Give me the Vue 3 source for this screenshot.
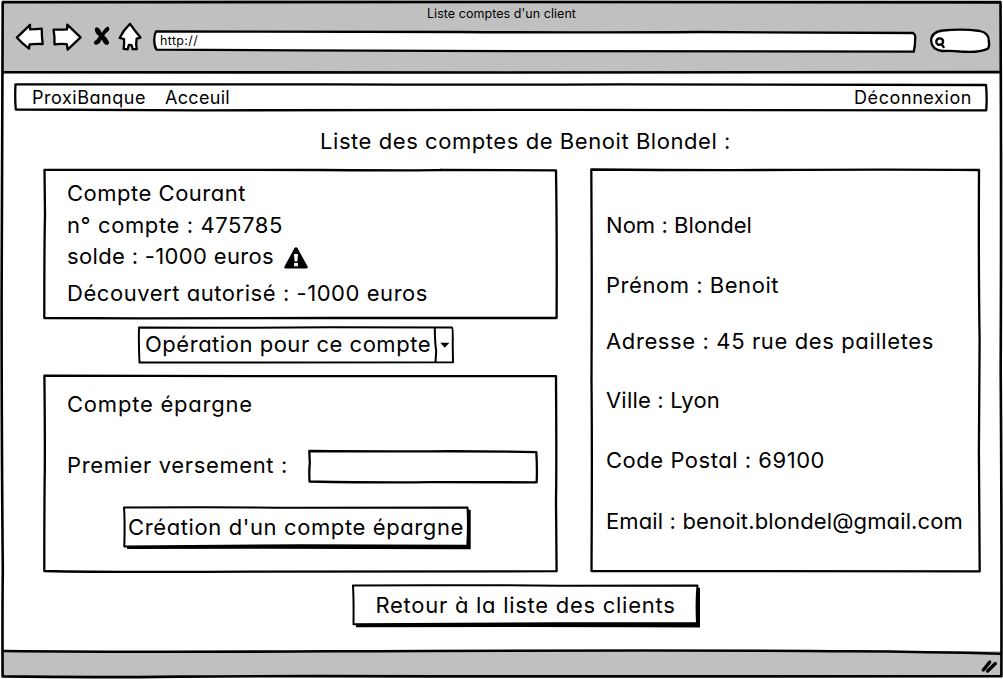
<script setup>
// Spreads the letters of a label so that it fills the given width.
const vFit = {
  mounted(el, { value }) {
    const natural = el.getBoundingClientRect().width
    el.style.letterSpacing = (value - natural) / el.textContent.length + 'px'
  },
}

const courant = [
  { text: 'Compte Courant', width: 179 },
  { text: 'n° compte : 475785', width: 216 },
  { text: 'solde : -1000 euros', width: 207, warning: true },
  { text: 'Découvert autorisé : -1000 euros', width: 361, last: true },
]

const client = [
  { text: 'Nom : Blondel', width: 146, size: 'h60' },
  { text: 'Prénom : Benoit', width: 173, size: 'h60' },
  { text: 'Adresse : 45 rue des pailletes', width: 328, size: 'h52' },
  { text: 'Ville : Lyon', width: 114, size: 'h66' },
  { text: 'Code Postal : 69100', width: 219, size: 'h54' },
  { text: 'Email : benoit.blondel@gmail.com', width: 357, size: 'h68' },
]
</script>

<template>
  <div class="window">
    <header class="chrome">
      <div class="title"><span v-fit="149">Liste comptes d'un client</span></div>
      <div class="toolbar">
        <svg class="icons" viewBox="14 22 130 30" width="130" height="30">
          <g class="ink fill-white">
            <path d="M16.8 37.6 L30 24.8 L30 29.4 Q36 29.2 41.7 28.7 Q41.8 37 42.7 44 Q36 43.6 29.6 44.4 L29 48.6 Q22 43.5 16.8 37.6Z" />
            <path d="M53.6 29.6 Q61 29.8 67 29.4 L67.3 24.6 Q74 31 80.6 37.3 L67.6 49.6 L66.8 44.2 Q60 43.5 54.5 44.4 Q54.8 37 53.6 29.6Z" />
            <path d="M130 23.9 Q135 31 140.5 37.6 L136.7 38.6 Q135.6 44 136.8 49.2 L132.6 49.2 L131.6 45.2 L128.8 45 L127.6 49.4 L123.6 48.8 Q124.4 44 124 39 L119.6 38 Q123.5 30 130 23.9Z" />
          </g>
          <path d="M94.8 29.5 Q95.5 26 98.5 28 Q100.6 29.6 102 33 Q104.5 27.5 108 26.5 Q110.3 28.5 108.8 30.7 Q105.3 33 104.2 35.6 Q107.2 38 109 42 Q109 45 106.6 45 Q104 44.5 101.8 39.4 Q99.6 44 96.2 44.8 Q93.2 44.5 94 41.8 Q97.3 40 99 36 Q95.2 33.5 94.8 29.5Z" />
        </svg>
        <div class="url">
          <svg class="sketch" viewBox="154 30 762 23"><path class="ink fill-white" d="M156 31.5 Q330 31.2 460 32 T700 32 L913 33 Q915.8 34.5 915.2 38 Q915.2 46 913.8 51.6 Q740 51.5 560 51.2 T300 50.4 L156.5 49.7 Q154 46 154.3 39 Q154.4 34 156 31.5Z" /></svg>
          <span v-fit="38" class="over">http://</span>
        </div>
        <div class="search">
          <svg class="sketch" viewBox="930 28 61 25">
            <path class="ink fill-white" d="M931.2 41 C931 35 935 31.5 943 30.5 Q962 28.4 980 31 C986.5 32.5 989 35.5 988.8 41 Q989.8 46 988 48.6 C981 51.8 968 52.2 960 51.5 Q951 50.4 942 51 C935 50 931.5 47 931.2 41Z" />
            <path class="ink" d="M936.2 41.5 Q937 37.8 940.5 38.4 Q943.6 39.2 943 42.6 Q941.5 45.5 938 44.6 Q936 43.5 936.2 41.5 M941.3 44 L943.6 47" />
          </svg>
        </div>
      </div>
    </header>

    <main class="page">
      <nav class="nav">
        <svg class="sketch" viewBox="15 84 972 27"><path class="ink" d="M15.5 84.3 Q180 83.8 330 84.4 T620 84.3 L986 85 Q987.2 98 986.2 110.3 Q800 110 560 109.9 T200 110.3 L15.8 109.5 Q14.8 98 15.5 84.3Z" /></svg>
        <span v-fit="114">ProxiBanque</span>
        <span v-fit="65">Acceuil</span>
        <span v-fit="118" class="logout">Déconnexion</span>
      </nav>

      <h1><span v-fit="411">Liste des comptes de Benoit Blondel :</span></h1>

      <div class="columns">
        <div class="left">
          <section class="card courant">
            <svg class="sketch" viewBox="44 169 513 150"><path class="ink" d="M44.5 169.8 Q190 169.4 320 170 T440 170 L556 170.3 Q557 230 556.6 318 Q420 317.5 330 318 T140 318.4 L44.3 318 Q44.3 240 45 215Z" /></svg>
            <p v-for="line in courant" :key="line.text" :class="{ last: line.last }">
              <span v-fit="line.width">{{ line.text }}</span>
              <svg v-if="line.warning" class="warn" viewBox="0 0 24 22" width="24" height="22">
                <path d="M10.4 1.3 Q12 -.8 13.6 1.3 L23.5 19.3 Q24.2 21.4 22 21.5 H2 Q-.2 21.4 .6 19.3Z" />
                <path class="mark" d="M9.9 7 H14.1 L13.3 14.5 H10.7Z M10.1 16 H13.9 V19.2 H10.1Z" />
              </svg>
            </p>
          </section>

          <div class="select">
            <svg class="sketch" viewBox="139 327 314 36">
              <path class="ink thin" d="M139 327.6 Q240 328 330 327.3 L452 327.5 Q453 328 452.7 344 L453 362.2 Q330 362.8 230 362.6 L139.5 362.5 Q138.6 345 139 327.6Z M434.8 328.3 Q435 344 436.2 351 L435.5 362" />
              <path d="M440.2 342.8 H449.4 L444.8 347.8Z" />
            </svg>
            <span v-fit="286">Opération pour ce compte</span>
          </div>

          <section class="card epargne">
            <svg class="sketch" viewBox="44 375 513 197"><path class="ink" d="M44.4 375.6 Q180 376.4 320 376.2 T556 376.1 Q556.6 470 556 500 L556.6 571.2 Q400 571 250 571.7 T44.3 571 Q44.3 500 44.8 470 Q45 430 44.4 375.6Z" /></svg>
            <p><span v-fit="186">Compte épargne</span></p>
            <label class="deposit">
              <span v-fit="221">Premier versement :</span>
              <span class="field">
                <svg class="sketch" viewBox="309 451 229 31"><path class="ink" d="M309.3 451 Q380 451.6 430 451.3 T536.3 452.2 Q537.3 467 536.7 482.3 L430 482.2 Q380 482.8 309.5 481.5 Q309 470 309.8 463Z" /></svg>
              </span>
            </label>
            <button class="btn create">
              <svg class="sketch" viewBox="124 507 344 40"><path d="M127 545 H467 V509 L470.7 510 V549.2 Q300 548.6 127 549Z" /><path class="ink fill-white thin" d="M124 507.5 Q220 507 300 507.7 L467.5 507.5 Q468.5 527 467.3 545.8 L300 545.3 L124.3 546.4 Q125 520 124 507.5Z" /></svg>
              <span v-fit="336" class="over">Création d'un compte épargne</span>
            </button>
          </section>
        </div>

        <section class="card client">
          <svg class="sketch" viewBox="591 169 389 403"><path class="ink" d="M591.3 169.5 Q700 170.3 800 169.9 T979 170 Q978.5 270 979.6 340 L978.9 450 L979.7 571.3 Q850 571.6 760 571.2 T591.5 571 Q592.2 450 591.5 380 Q592 280 591.3 169.5Z" /></svg>
          <p v-for="line in client" :key="line.text" :class="line.size"><span v-fit="line.width">{{ line.text }}</span></p>
        </section>
      </div>

      <button class="btn back">
        <svg class="sketch" viewBox="353 585 345 40"><path d="M356 623 H696 V587 L700 588 V627.5 Q560 626.8 356 627.3Z" /><path class="ink fill-white thin" d="M353 585.4 Q450 584.8 560 585.7 L697.5 585.5 Q696 600 697 623.3 L560 623.3 L353.5 624.3 Q353.8 600 353 585.4Z" /></svg>
        <span v-fit="300" class="over">Retour à la liste des clients</span>
      </button>
    </main>

    <footer class="status"></footer>

    <svg class="sketch frame" viewBox="0 0 1003 679">
      <path class="ink heavy" d="M2.7 2.3 Q300 1.7 500 2 T1000.5 2.4 Q1001.5 200 1000.7 370 Q1001.8 520 1001.4 676.3 Q700 677 480 676.4 T180 676.6 Q90 677.8 2.6 676.4 Q2.3 610 2.8 570 Q1.6 440 1.6 300 Q2 110 2.7 2.3Z" />
      <path class="ink heavy" d="M3 72.2 Q200 73.4 500 72.5 T1000 72.1" />
      <path class="ink heavy" d="M3 651 Q140 652.3 330 651.3 Q700 649.8 850 651.3 Q930 651.8 1000.5 653.8" />
      <path class="grip" d="M983.3 670 L989.7 662 M987.6 671 L995.3 663.6" />
    </svg>
  </div>
</template>

<style>
body { background: #fff; }
</style>

<style scoped>
.window {
  position: relative;
  display: flex;
  flex-direction: column;
  width: 1003px;
  height: 679px;
  overflow: hidden;
  background: #fff;
  color: #000;
  font: 22px/32px Inter, "Liberation Sans", sans-serif;
  font-feature-settings: "cv11" 1;
}
.sketch {
  position: absolute;
  inset: 0;
  width: 100%;
  height: 100%;
  overflow: visible;
  pointer-events: none;
}
.ink { fill: none; stroke: #000; stroke-width: 2.3; stroke-linejoin: round; stroke-linecap: round; }
.ink.thin { stroke-width: 2; }
.ink.heavy { stroke-width: 2.6; }
.fill-white, .fill-white path { fill: #fff; }
.grip { fill: none; stroke: #000; stroke-width: 3.4; stroke-linecap: round; }
span { white-space: nowrap; }
.over { position: relative; }
h1, p { margin: 0; font-size: inherit; font-weight: 400; }

.chrome {
  flex: none;
  height: 72px;
  margin: 0 2px;
  background: #c0c0c0;
}
.title {
  height: 22px;
  padding-top: 5px;
  box-sizing: border-box;
  line-height: 17px;
  font-size: 12.5px;
  text-align: center;
}
.toolbar { display: flex; align-items: flex-start; padding-left: 12px; }
.icons { flex: none; }
.url {
  position: relative;
  width: 762px;
  height: 23px;
  margin: 8px 0 0 10px;
  padding-left: 6px;
  box-sizing: border-box;
  font-size: 12.5px;
  line-height: 21px;
}
.search { position: relative; width: 61px; height: 25px; margin: 6px 0 0 14px; }

.page { display: flex; flex-direction: column; flex: 1; padding: 12px 16px 0 15px; }
.nav {
  position: relative;
  display: flex;
  gap: 19px;
  height: 27px;
  padding: 0 15px 0 17px;
  font-size: 18px;
  line-height: 27px;
}
.logout { margin-left: auto; }
h1 { margin: 14px 0 12px; padding-left: 305px; }
.columns { display: flex; gap: 34px; padding-left: 29px; height: 403px; }
.left { width: 513px; }
.card { position: relative; box-sizing: border-box; }
.courant { height: 150px; padding: 8px 0 0 23px; }
.courant p { display: flex; align-items: center; gap: 10px; height: 32px; }
.courant p:nth-of-type(3) { height: 30px; }
.courant .last { margin-top: 6px; }
.warn { margin-top: 3px; }
.mark { fill: #fff; }
.select {
  position: relative;
  width: 314px;
  height: 36px;
  margin: 8px 0 12px 95px;
  padding-left: 6px;
  box-sizing: border-box;
  line-height: 35px;
}
.epargne { height: 197px; padding: 13px 0 0 23px; }
.deposit { display: flex; align-items: center; gap: 21px; height: 31px; margin-top: 31px; }
.deposit > span:first-child { padding-bottom: 3px; }
.field { position: relative; width: 229px; height: 31px; }
.btn {
  position: relative;
  display: block;
  height: 40px;
  padding: 0;
  border: 0;
  background: none;
  color: inherit;
  font: inherit;
  font-feature-settings: inherit;
  text-align: center;
}
.create { width: 344px; margin: 25px 0 0 57px; }
.back { width: 345px; margin: 13px 0 0 338px; }
.client { width: 389px; padding: 26px 0 0 15px; }
.client p { display: flex; align-items: center; }
.h52 { height: 52px; }
.h54 { height: 54px; }
.h60 { height: 60px; }
.h66 { height: 66px; }
.h68 { height: 68px; }
.status { flex: none; height: 26px; margin: 0 2px 2px; background: #c0c0c0; }
</style>
